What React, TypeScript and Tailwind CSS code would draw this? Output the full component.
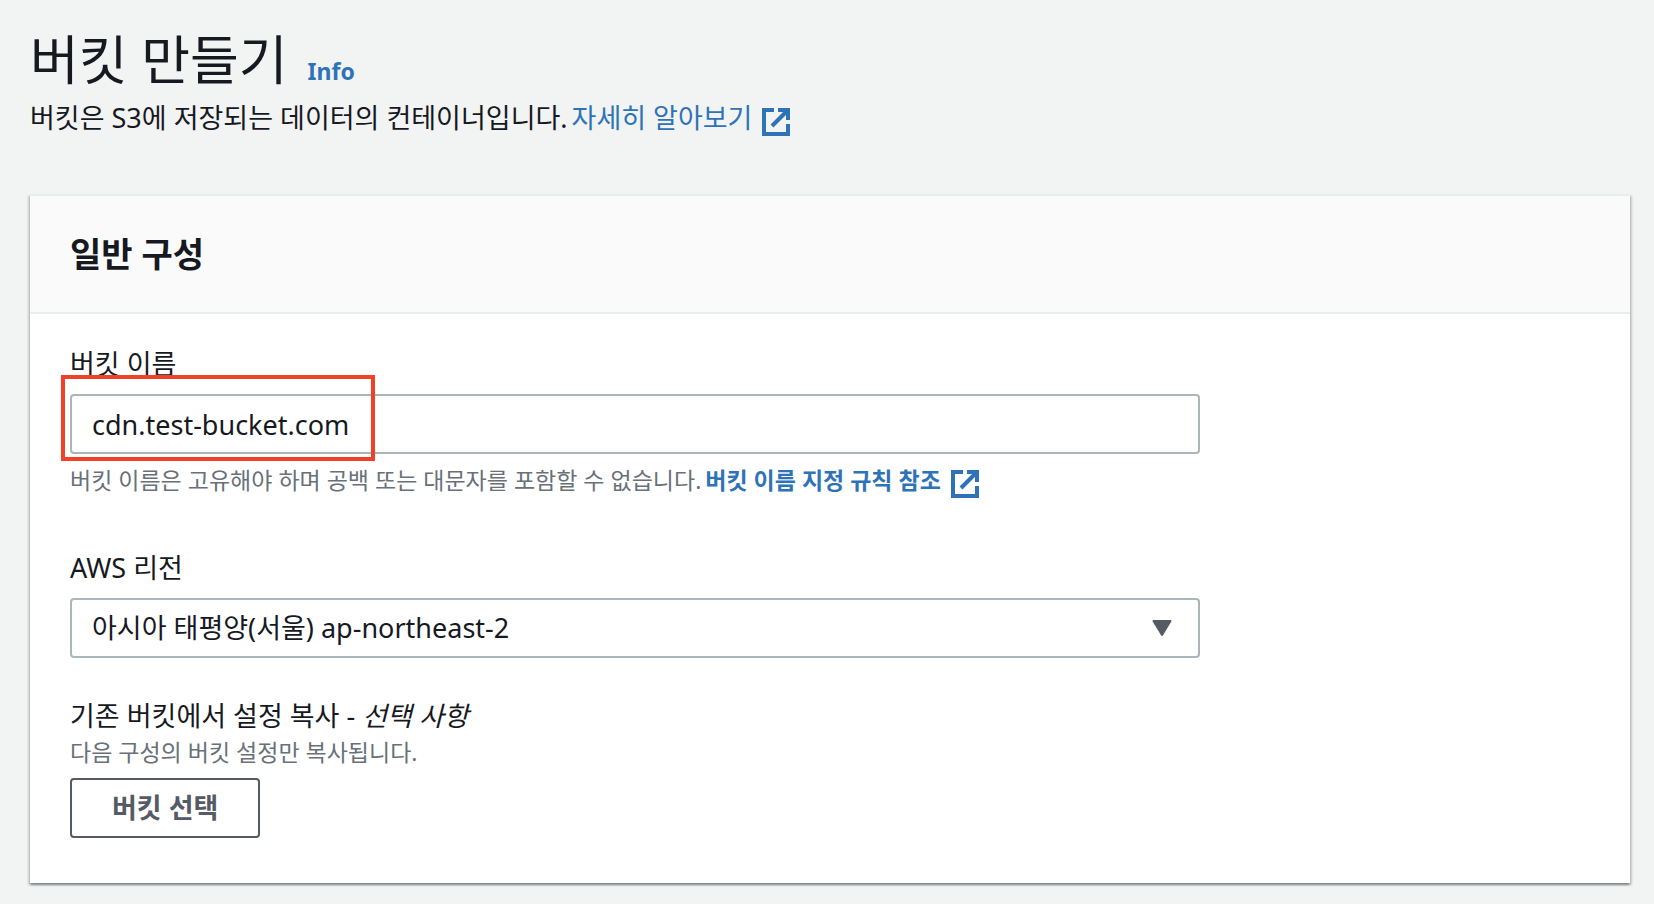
import { useState } from "react";

function ExternalIcon() {
  return (
    <svg viewBox="0 0 28 28" className="mt-2 h-7 w-7 shrink-0" fill="none" aria-hidden="true">
      <path d="M12 2H2v24h24V16" stroke="currentColor" strokeWidth="4" />
      <path d="M10 18 24 4" stroke="currentColor" strokeWidth="4" />
      <path d="M16 0h12v12h-4V6.5L21.5 4H16z" fill="currentColor" />
    </svg>
  );
}

export default function App() {
  const [bucketName, setBucketName] = useState("cdn.test-bucket.com");
  const [region, setRegion] = useState("ap-northeast-2");

  return (
    <div
      lang="ko"
      className="min-h-screen bg-[#f2f3f3] pt-7 pr-6 pb-5 pl-[30px] font-['Noto_Sans','Noto_Sans_CJK_KR',sans-serif] text-[27px] leading-9 text-[#16191f]"
    >
      <header className="mb-[58px]">
        <div className="flex items-baseline gap-5">
          <h1 className="text-[53px] leading-[64px]">버킷 만들기</h1>
          <a href="#info" className="text-[23px] font-bold text-[#2e73b8]">
            Info
          </a>
        </div>
        <p className="mt-2 flex flex-wrap items-center gap-1">
          <span>버킷은 S3에 저장되는 데이터의 컨테이너입니다.</span>
          <a href="#learn-more" className="flex items-center gap-2.5 text-[#2e73b8]">
            자세히 알아보기
            <ExternalIcon />
          </a>
        </p>
      </header>

      <main className="border-t-2 border-[#eaeded] bg-white shadow-[0_2px_2px_0_rgba(0,28,36,0.3),2px_2px_2px_0_rgba(0,28,36,0.15),-2px_2px_2px_0_rgba(0,28,36,0.15)]">
        <div className="border-b-2 border-[#eaeded] bg-[#fafafa] px-10 py-9">
          <h2 className="text-[34px] leading-[44px] font-bold">일반 구성</h2>
        </div>

        <form className="px-10 pt-8 pb-[45px]" onSubmit={(e) => e.preventDefault()}>
          <div className="w-3/4 pr-2.5">
            <label htmlFor="bucket-name" className="block">
              버킷 이름
            </label>
            <div className="relative mt-3">
              <input
                id="bucket-name"
                type="text"
                value={bucketName}
                onChange={(e) => setBucketName(e.target.value)}
                className="block h-[60px] w-full rounded border-2 border-[#aab7b8] bg-white px-5"
              />
              <div className="pointer-events-none absolute -top-[19px] -left-[9px] h-[86px] w-[314px] border-4 border-[#ef4227]" />
            </div>
            <p className="mt-2 flex flex-wrap items-center gap-1 text-[23px] text-[#687078]">
              <span>버킷 이름은 고유해야 하며 공백 또는 대문자를 포함할 수 없습니다.</span>
              <a href="#naming-rules" className="flex items-center gap-2.5 font-bold text-[#2e73b8]">
                버킷 이름 지정 규칙 참조
                <ExternalIcon />
              </a>
            </p>
          </div>

          <div className="mt-13 w-3/4 pr-2.5">
            <label htmlFor="region" className="block">
              AWS 리전
            </label>
            <div className="relative mt-3">
              <select
                id="region"
                value={region}
                onChange={(e) => setRegion(e.target.value)}
                className="block h-[60px] w-full appearance-none rounded border-2 border-[#aab7b8] bg-white px-5"
              >
                <option value="ap-northeast-2">아시아 태평양(서울) ap-northeast-2</option>
              </select>
              <svg
                viewBox="0 0 20 16"
                className="pointer-events-none absolute top-[22px] right-7 h-4 w-5"
                fill="#545b64"
                stroke="#545b64"
                strokeWidth="2"
                strokeLinejoin="round"
                aria-hidden="true"
              >
                <path d="M1.5 1h17L10 15z" />
              </svg>
            </div>
          </div>

          <div className="mt-10">
            <h3>
              기존 버킷에서 설정 복사 - <em>선택 사항</em>
            </h3>
            <p className="text-[23px] text-[#687078]">다음 구성의 버킷 설정만 복사됩니다.</p>
            <button
              type="button"
              className="mt-2 h-[60px] rounded border-2 border-[#545b64] bg-white px-10 font-bold text-[#545b64]"
            >
              버킷 선택
            </button>
          </div>
        </form>
      </main>
    </div>
  );
}
